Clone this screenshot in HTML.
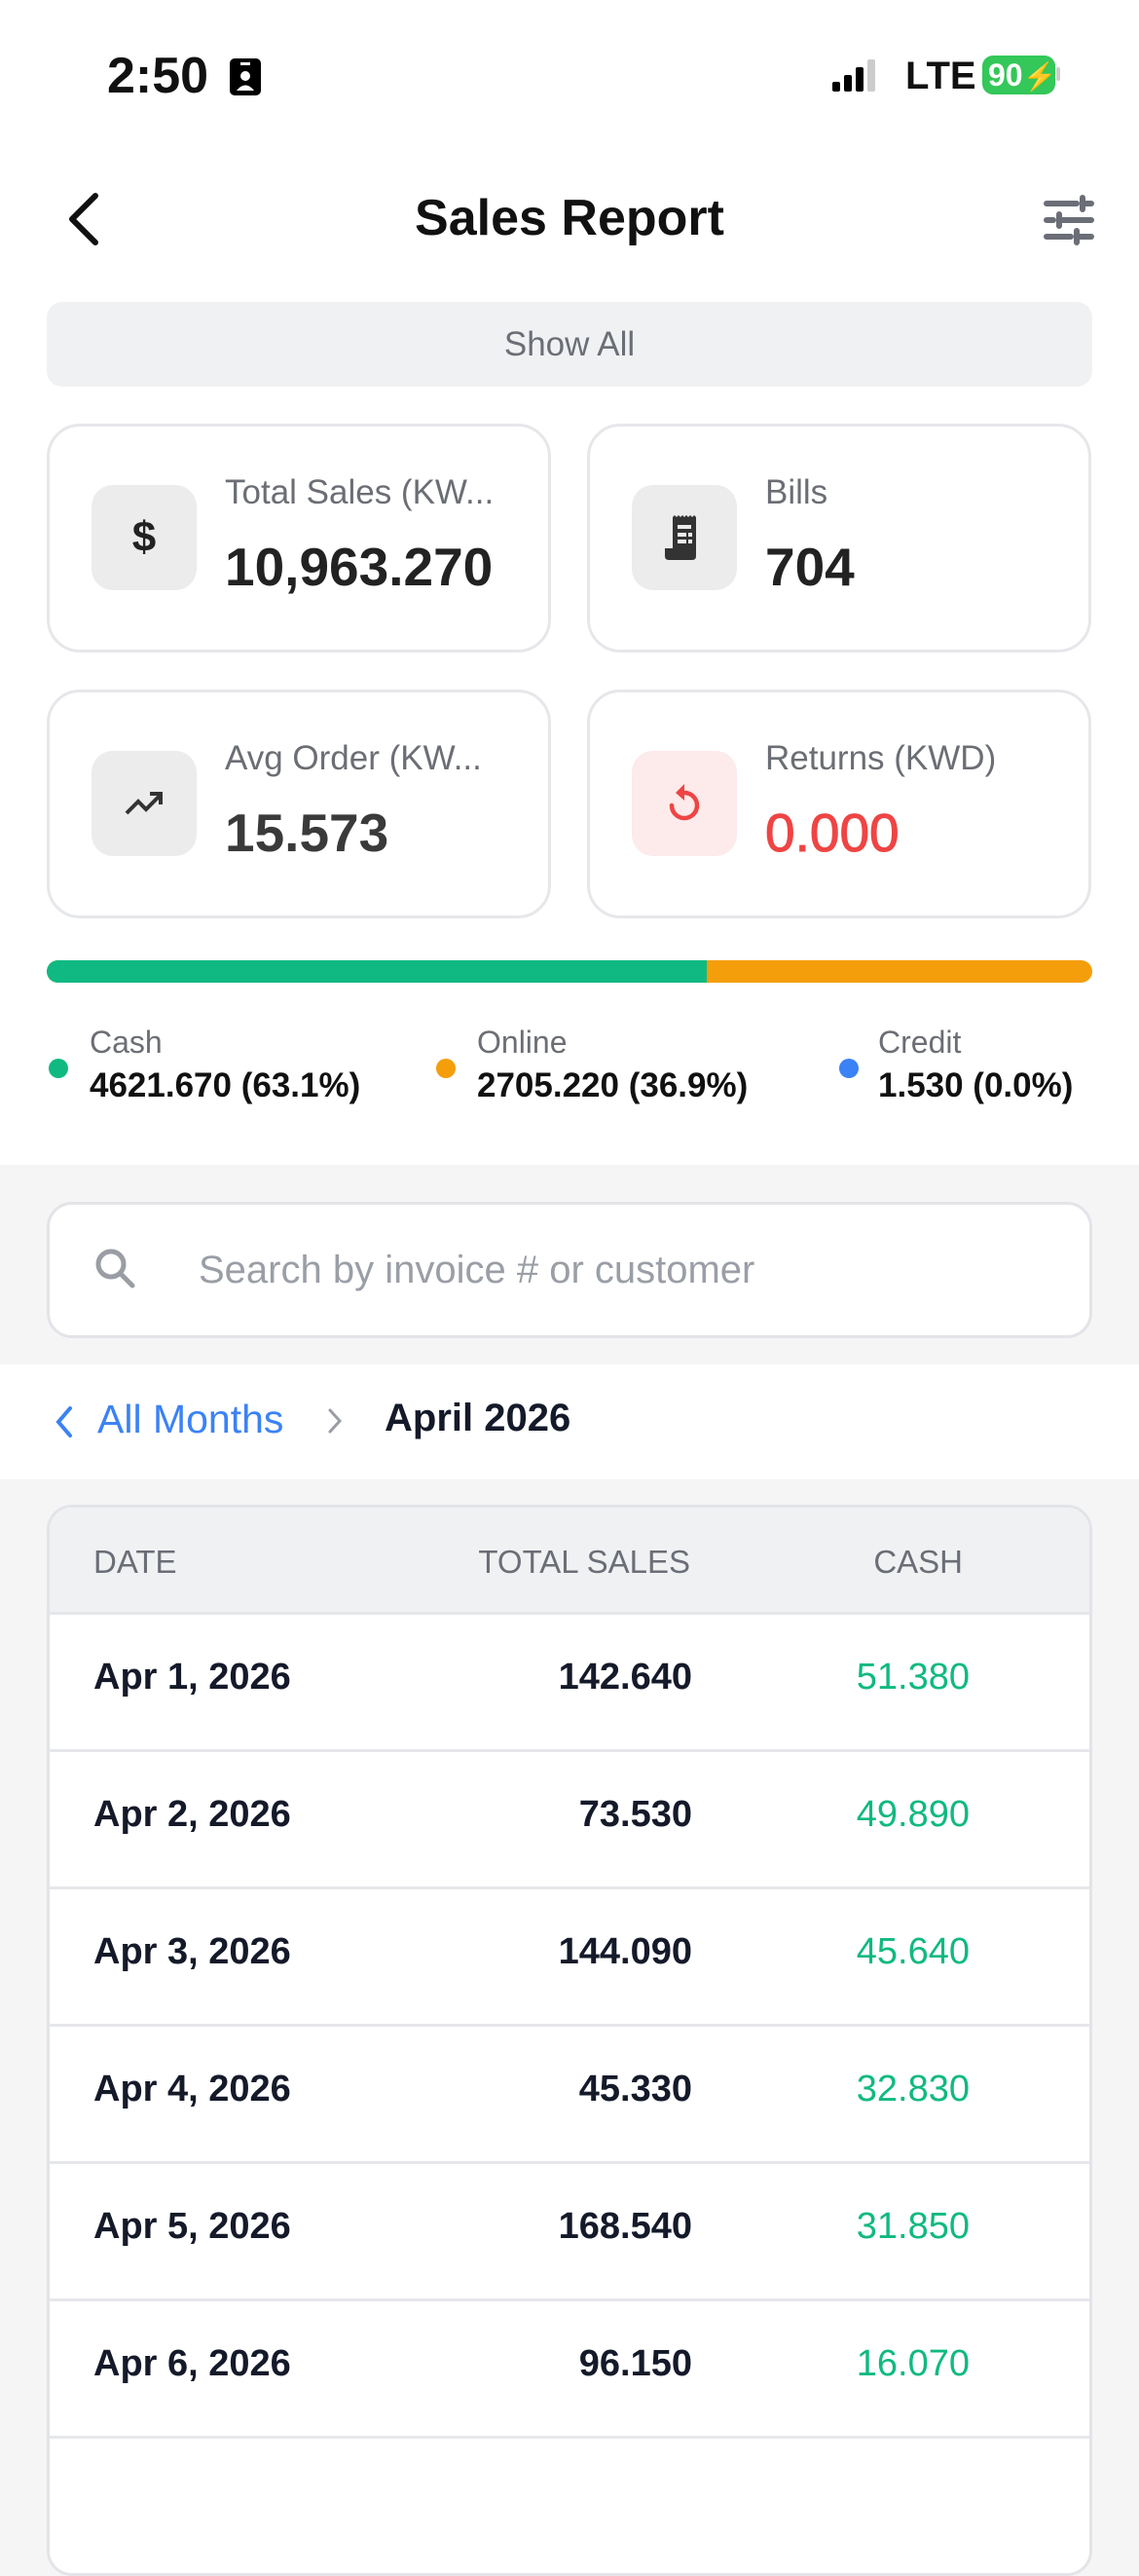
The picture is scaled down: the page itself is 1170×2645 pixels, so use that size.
<!DOCTYPE html>
<html><head><meta charset="utf-8"><style>
*{box-sizing:border-box;margin:0;padding:0}
body{width:1170px;height:2532px;overflow:hidden;background:#f5f5f6;font-family:"Liberation Sans",sans-serif;position:relative;color:#111}
.abs{position:absolute}
.top{left:0;top:0;width:1170px;height:1196px;background:#fff}
.card{background:#fff;border:3px solid #e6e7ea;border-radius:34px;width:518px;height:235px}
.ib{position:absolute;left:43px;top:60px;width:108px;height:108px;border-radius:22px;background:#ececed;display:flex;align-items:center;justify-content:center}
.lab{position:absolute;left:180px;top:48px;font-size:35px;color:#6b6e74;white-space:nowrap}
.val{position:absolute;left:180px;top:112px;font-size:55px;font-weight:bold;color:#222}
.lg{font-size:32px;color:#6b6e74}
.lv{font-size:35px;font-weight:bold;color:#111;margin-top:6px}
.dot{position:absolute;width:20px;height:20px;border-radius:50%}
.row{position:absolute;left:0;width:1070px;height:141px;border-top:3px solid #e6e7ea;background:#fff}
.row div{position:absolute;top:43px;font-size:38px;font-weight:bold;color:#151a2a}
.row .d{left:45px}
.row .t{right:410px}
.row .c{right:125px;color:#10b981;font-weight:normal}
</style></head><body>
<div class="abs top"></div>
<div class="abs" style="left:110px;top:48px;font-size:52px;font-weight:bold">2:50</div>
<svg class="abs" style="left:234px;top:58px" width="36" height="42" viewBox="0 0 36 42"><rect x="2" y="2" width="32" height="38" rx="5" fill="#000"/><rect x="13" y="6" width="10" height="3" fill="#fff"/><circle cx="18" cy="20" r="5" fill="#fff"/><path d="M9 35 Q18 24 27 35Z" fill="#fff"/></svg>
<svg class="abs" style="left:855px;top:60px" width="60" height="36"><rect x="0" y="24" width="8" height="10" rx="2"/><rect x="12" y="17" width="8" height="17" rx="2"/><rect x="24" y="9" width="8" height="25" rx="2"/><rect x="36" y="1" width="8" height="33" rx="2" fill="#ccc"/></svg>
<div class="abs" style="left:930px;top:56px;font-size:40px;font-weight:bold">LTE</div>
<div class="abs" style="left:1009px;top:57px;width:75px;height:40px;background:#34c759;border-radius:11px;color:#fff;font-weight:bold;font-size:32px;padding:2px 0 0 6px">90<span style="font-size:28px">⚡</span></div>
<div class="abs" style="left:1085px;top:69px;width:4px;height:14px;background:#ccc;border-radius:2px"></div>
<svg class="abs" style="left:60px;top:195px" width="50" height="60"><path d="M38 6 L14 30 L38 54" stroke="#111" stroke-width="6" fill="none" stroke-linecap="round" stroke-linejoin="round"/></svg>
<div class="abs" style="left:0;width:1170px;top:194px;text-align:center;font-size:52px;font-weight:bold;color:#111">Sales Report</div>
<svg class="abs" style="left:1072px;top:200px" width="52" height="52" stroke="#6b6e76" stroke-width="6" stroke-linecap="round"><path d="M3 9H34M40 3V15M40 9H49M3 26H10M16 20V32M16 26H49M3 43H28M34 37V49M34 43H49"/></svg>
<div class="abs" style="left:48px;top:310px;width:1074px;height:87px;background:#f0f1f3;border-radius:16px;text-align:center;line-height:87px;font-size:35px;color:#6b6e76">Show All</div>

<div class="abs card" style="left:48px;top:435px"><div class="ib"><span style="font-size:44px;font-weight:bold;color:#222">$</span></div><div class="lab">Total Sales (KW...</div><div class="val">10,963.270</div></div>
<div class="abs card" style="left:603px;top:435px"><div class="ib"><svg width="44" height="50" viewBox="0 0 44 50"><path d="M10 4 L12 2 L14 4 L16 2 L18 4 L20 2 L22 4 L24 2 L26 4 L28 2 L30 4 L32 2 L34 4 V40 H10Z" fill="#333"/><rect x="15" y="12" width="14" height="4" fill="#ececed"/><rect x="15" y="20" width="9" height="4" fill="#ececed"/><rect x="26" y="20" width="4" height="4" fill="#ececed"/><rect x="15" y="27" width="9" height="4" fill="#ececed"/><rect x="26" y="27" width="4" height="4" fill="#ececed"/><path d="M2 36 H34 V44 Q34 48 30 48 H6 Q2 48 2 44Z" fill="#333"/></svg></div><div class="lab">Bills</div><div class="val">704</div></div>
<div class="abs card" style="left:48px;top:708px"><div class="ib"><svg width="44" height="44" viewBox="0 0 44 44"><path d="M4 32 L16 20 L24 28 L38 14 M28 12 H39 V23" stroke="#333" stroke-width="4" fill="none"/></svg></div><div class="lab">Avg Order (KW...</div><div class="val" style="color:#3a3a3a">15.573</div></div>
<div class="abs card" style="left:603px;top:708px"><div class="ib" style="background:#fdeaea"><svg width="44" height="50" viewBox="0 0 44 50"><path d="M22 14 A13 13 0 1 1 9 27" stroke="#ef4444" stroke-width="4.5" fill="none" stroke-linecap="round"/><path d="M22 5 L13 14 L22 22Z" fill="#ef4444"/></svg></div><div class="lab">Returns (KWD)</div><div class="val" style="color:#ef4444;font-weight:normal;-webkit-text-stroke:1px #ef4444">0.000</div></div>

<div class="abs" style="left:48px;top:986px;width:1074px;height:23px;border-radius:12px;overflow:hidden;background:#f59e0b"><div style="width:678px;height:100%;background:#10b981"></div></div>
<div class="dot" style="left:50px;top:1087px;background:#10b981"></div>
<div class="abs" style="left:92px;top:1052px"><div class="lg">Cash</div><div class="lv">4621.670 (63.1%)</div></div>
<div class="dot" style="left:448px;top:1087px;background:#f59e0b"></div>
<div class="abs" style="left:490px;top:1052px"><div class="lg">Online</div><div class="lv">2705.220 (36.9%)</div></div>
<div class="dot" style="left:862px;top:1087px;background:#3b82f6"></div>
<div class="abs" style="left:902px;top:1052px"><div class="lg">Credit</div><div class="lv">1.530 (0.0%)</div></div>

<div class="abs" style="left:48px;top:1234px;width:1074px;height:140px;background:#fff;border:3px solid #e3e4e8;border-radius:26px"></div>
<svg class="abs" style="left:96px;top:1280px" width="46" height="46"><circle cx="18" cy="18" r="13" stroke="#9a9da3" stroke-width="5" fill="none"/><path d="M28 28 L40 40" stroke="#9a9da3" stroke-width="5" stroke-linecap="round"/></svg>
<div class="abs" style="left:204px;top:1282px;font-size:40px;color:#9a9ea6">Search by invoice # or customer</div>

<div class="abs" style="left:0;top:1401px;width:1170px;height:118px;background:#fff"></div>
<svg class="abs" style="left:54px;top:1442px" width="24" height="36"><path d="M18 4 L6 18 L18 32" stroke="#3b82f6" stroke-width="4" fill="none" stroke-linecap="round"/></svg>
<div class="abs" style="left:100px;top:1434px;font-size:41px;color:#3b82f6">All Months</div>
<svg class="abs" style="left:334px;top:1444px" width="20" height="30"><path d="M5 4 L15 15 L5 26" stroke="#9a9da3" stroke-width="3" fill="none" stroke-linecap="round"/></svg>
<div class="abs" style="left:395px;top:1434px;font-size:40px;font-weight:bold;color:#151a2a">April 2026</div>

<div class="abs" style="left:48px;top:1545px;width:1074px;height:1100px;border:3px solid #e3e4e8;border-radius:26px;overflow:hidden;background:#fff">
<div style="position:absolute;left:0;top:0;width:100%;height:107px;background:#f0f1f3"></div>
<div style="position:absolute;left:45px;top:37px;font-size:33px;color:#6b6e76">DATE</div>
<div style="position:absolute;right:410px;top:37px;font-size:33px;color:#6b6e76">TOTAL SALES</div>
<div style="position:absolute;right:130px;top:37px;font-size:33px;color:#6b6e76">CASH</div>
<div class="row" style="top:107px"><div class="d">Apr 1, 2026</div><div class="t">142.640</div><div class="c">51.380</div></div>
<div class="row" style="top:248px"><div class="d">Apr 2, 2026</div><div class="t">73.530</div><div class="c">49.890</div></div>
<div class="row" style="top:389px"><div class="d">Apr 3, 2026</div><div class="t">144.090</div><div class="c">45.640</div></div>
<div class="row" style="top:530px"><div class="d">Apr 4, 2026</div><div class="t">45.330</div><div class="c">32.830</div></div>
<div class="row" style="top:671px"><div class="d">Apr 5, 2026</div><div class="t">168.540</div><div class="c">31.850</div></div>
<div class="row" style="top:812px"><div class="d">Apr 6, 2026</div><div class="t">96.150</div><div class="c">16.070</div></div>
<div class="row" style="top:953px"></div>
</div>
</body></html>
